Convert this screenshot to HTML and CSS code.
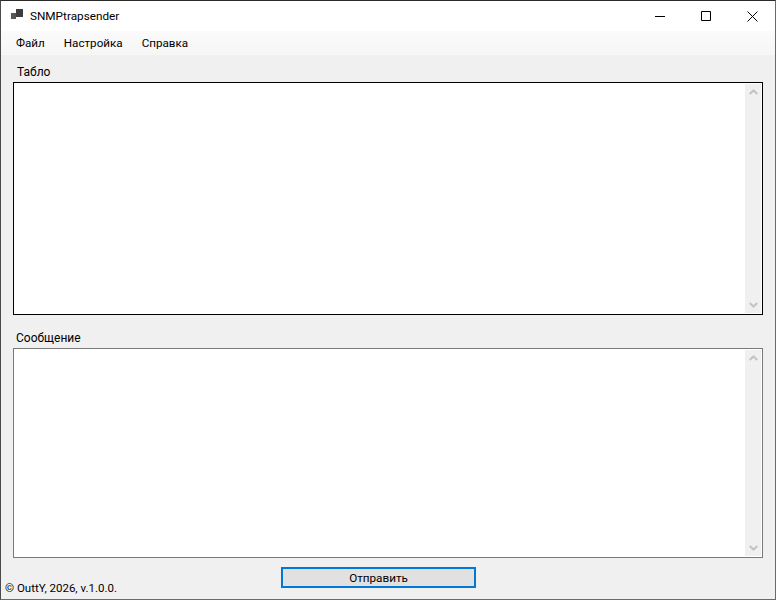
FILE: index.html
```html
<!DOCTYPE html>
<html lang="ru">
<head>
<meta charset="utf-8">
<title>SNMPtrapsender</title>
<link rel="stylesheet" href="styles.css">
</head>
<body>
<div class="window">
  <header class="titlebar">
    <svg class="app-icon" width="16" height="16" viewBox="0 0 16 16"><path d="M6 1h7v8H6z" fill="#3c3c3c"/><path d="M1 5h5v6H1z" fill="#555"/></svg>
    <span class="title">SNMPtrapsender</span>
    <div class="controls">
      <button class="ctl"><svg width="10" height="10" viewBox="0 0 10 10"><path d="M0 5.5h10" stroke="#000" fill="none"/></svg></button>
      <button class="ctl"><svg width="10" height="10" viewBox="0 0 10 10"><path d="M.5.5h9v9h-9z" stroke="#000" fill="none"/></svg></button>
      <button class="ctl"><svg width="11" height="11" viewBox="0 0 11 11"><path d="M.5.5l10 10M10.5.5l-10 10" stroke="#000" fill="none"/></svg></button>
    </div>
  </header>
  <nav class="menubar">
    <span class="menu-item">Файл</span>
    <span class="menu-item">Настройка</span>
    <span class="menu-item">Справка</span>
  </nav>
  <main class="content">
    <label class="label label-top">Табло</label>
    <div class="textbox textbox-top">
      <div class="scrollbar">
        <svg class="arrow" width="9" height="6" viewBox="0 0 9 6"><path d="M.7 5L4.5 1.4 8.3 5" stroke="#c4c4c4" stroke-width="2" fill="none"/></svg>
        <svg class="arrow" width="9" height="6" viewBox="0 0 9 6"><path d="M.7 1L4.5 4.6 8.3 1" stroke="#c4c4c4" stroke-width="2" fill="none"/></svg>
      </div>
    </div>
    <label class="label label-bottom">Сообщение</label>
    <div class="textbox textbox-bottom">
      <div class="scrollbar">
        <svg class="arrow" width="9" height="6" viewBox="0 0 9 6"><path d="M.7 5L4.5 1.4 8.3 5" stroke="#c4c4c4" stroke-width="2" fill="none"/></svg>
        <svg class="arrow" width="9" height="6" viewBox="0 0 9 6"><path d="M.7 1L4.5 4.6 8.3 1" stroke="#c4c4c4" stroke-width="2" fill="none"/></svg>
      </div>
    </div>
    <footer class="footer">
      <span class="copyright">© OuttY, 2026, v.1.0.0.</span>
      <button class="send">Отправить</button>
    </footer>
  </main>
</div>
</body>
</html>
```

FILE: styles.css
```css
* { box-sizing: border-box; }
html, body { margin: 0; height: 100%; }
body { font-family: Roboto, "Open Sans", sans-serif; font-size: 12px; color: #000; overflow: hidden; }
.window { width: 776px; height: 600px; border: 1px solid #4a4a4a; border-top-color: #2b2b2b; border-right-color: #6a6a6a; border-bottom-color: #6a6a6a; display: flex; flex-direction: column; background: #f0f0f0; }
.titlebar { height: 30px; background: #fff; display: flex; align-items: center; padding-left: 9px; flex: none; }
.app-icon { flex: none; }
.title { margin-left: 4px; line-height: 30px; font-size: 11.75px; }
.controls { margin-left: auto; display: flex; height: 30px; }
.ctl { width: 46px; height: 30px; padding: 0; border: 0; background: none; display: flex; align-items: center; justify-content: center; }
.menubar { height: 24px; background: linear-gradient(#fbfbfb, #f6f6f6); display: flex; align-items: center; padding-left: 15px; gap: 19px; flex: none; line-height: 24px; font-size: 11.65px; }
.content { flex: 1; display: flex; flex-direction: column; padding-left: 12px; min-height: 0; }
.label { display: block; line-height: 16px; height: 16px; }
.label-top { margin-top: 9px; padding-left: 4px; }
.label-bottom { margin-top: 15px; padding-left: 3px; }
.textbox { width: 750px; background: #fff; border: 1px solid #000; padding: 1px; display: flex; justify-content: flex-end; }
.textbox-top { height: 233px; margin-top: 2px; }
.textbox-bottom { height: 210px; border-color: #7a7a7a; margin-top: 2px; }
.scrollbar { width: 16px; background: #f0f0f0; display: flex; flex-direction: column; justify-content: space-between; align-items: center; padding: 5px 0 5px; }
.arrow { display: block; }
.footer { flex: 1; display: grid; grid-template-columns: 268px 195px; margin-left: -12px; padding-left: 12px; padding-top: 9px; align-items: start; }
.copyright { align-self: start; padding-top: 13px; line-height: 16px; margin-left: -8px; white-space: nowrap; font-size: 11.5px; }
.send { width: 195px; height: 21px; border: 2px solid #0078d7; background: #e1e1e1; font: inherit; font-size: 11.7px; padding: 0; line-height: 16px; color: #000; }
```
